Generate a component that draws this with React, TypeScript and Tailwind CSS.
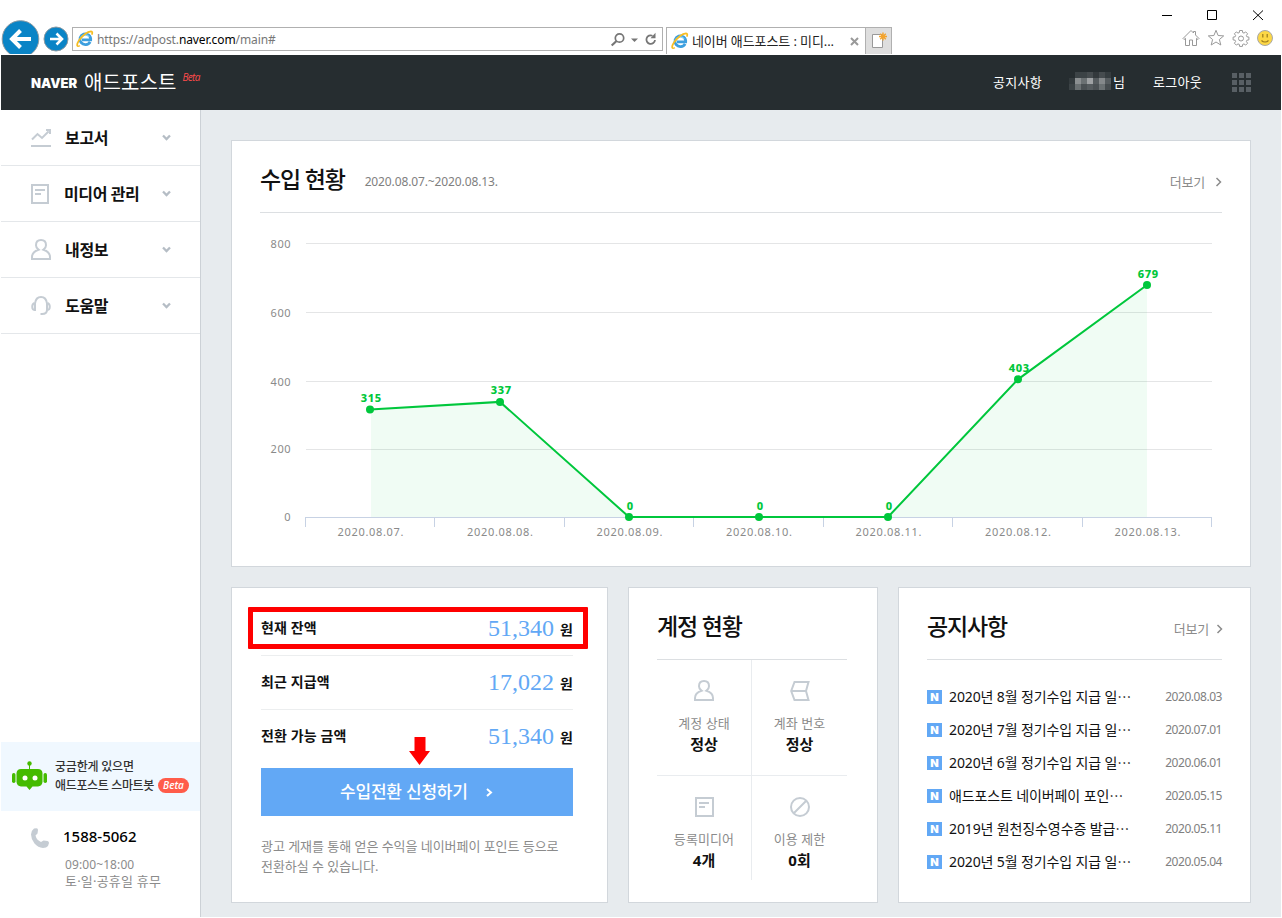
import type { ReactNode } from 'react';
import clsx from 'clsx';

const CHART = [
  { date: '2020.08.07.', value: 315 },
  { date: '2020.08.08.', value: 337 },
  { date: '2020.08.09.', value: 0 },
  { date: '2020.08.10.', value: 0 },
  { date: '2020.08.11.', value: 0 },
  { date: '2020.08.12.', value: 403 },
  { date: '2020.08.13.', value: 679 },
];

const NOTICES = [
  { title: '2020년 8월 정기수입 지급 일⋯', date: '2020.08.03' },
  { title: '2020년 7월 정기수입 지급 일⋯', date: '2020.07.01' },
  { title: '2020년 6월 정기수입 지급 일⋯', date: '2020.06.01' },
  { title: '애드포스트 네이버페이 포인⋯', date: '2020.05.15' },
  { title: '2019년 원천징수영수증 발급⋯', date: '2020.05.11' },
  { title: '2020년 5월 정기수입 지급 일⋯', date: '2020.05.04' },
];

const BALANCES = [
  { label: '현재 잔액', amount: '51,340' },
  { label: '최근 지급액', amount: '17,022' },
  { label: '전환 가능 금액', amount: '51,340' },
];

function IeIcon() {
  return (
    <svg width="18" height="18" viewBox="0 0 18 18" fill="none" className="shrink-0">
      <path d="M14.100 11.800A5.400 5.400 0 1 1 14.700 9.800H6" stroke="#3d9fdf" strokeWidth="2.800" />
      <path d="M4.800 7.600A4.800 4.800 0 0 1 13.200 7" stroke="#86d2f7" strokeWidth="1.200" />
      <path d="M3.800 15.600C.600 17.600.300 14.600 2.800 10.800 5.800 6 11.500 1.400 15 1.300c1.700 0 1.500 1.800.700 3.400" stroke="#f7bd22" strokeWidth="1.700" />
    </svg>
  );
}

function ReportIcon() {
  return (
    <svg width="20" height="20" viewBox="0 0 20 20" fill="none" stroke="#c5ccd3" strokeWidth="2">
      <path d="M1 11.500 6.500 6l4.500 4L17.500 3.500M15 2h4v4" />
      <path d="M15.500 1.500H19V5z" fill="#c5ccd3" stroke="none" />
      <path d="M0 18h20" />
    </svg>
  );
}

function MediaIcon({ width = 18 }: { width?: number }) {
  return (
    <svg width={width} height="20" viewBox={`0 0 ${width} 20`} fill="none" stroke="#c5ccd3" strokeWidth="2">
      <path d={`M1 1h${width - 2}v18H1z`} />
      <path d="M4 6h10M4 10h6" />
    </svg>
  );
}

function PersonIcon() {
  return (
    <svg width="20" height="21" viewBox="0 0 20 21" fill="none" stroke="#c5ccd3" strokeWidth="2">
      <path d="M7.500 10.700Q5 9 5 6.200C5 3 7 1 10 1s5 2 5 5.200Q15 9 12.500 10.700C16.500 12 19 14.500 19 18v2H1v-2c0-3.500 2.500-6 6.500-7.300z" />
    </svg>
  );
}

function HeadsetIcon() {
  return (
    <svg width="20" height="20" viewBox="0 0 20 20" fill="none" stroke="#c5ccd3" strokeWidth="2">
      <path d="M4 15V7.500C4.500 3.500 7 1 10 1s5.500 2.500 6 6.500V14c0 2.500-2 4-5 4H9.500" />
      <path d="M3.500 7C.500 8 .500 13.500 3.500 14M16.500 7c3 1 3 6.500 0 7" />
    </svg>
  );
}

function AccountIcon() {
  return (
    <svg width="20" height="20" viewBox="0 0 20 20" fill="none" stroke="#c5ccd3" strokeWidth="2">
      <path d="M4.500 1H18.500L16 10l2.500 9H4.500L1.200 10zM1.200 10H16" />
    </svg>
  );
}

function BanIcon() {
  return (
    <svg width="20" height="20" viewBox="0 0 20 20" fill="none" stroke="#c5ccd3" strokeWidth="2">
      <circle cx="10" cy="10" r="9" />
      <path d="M4 16 16 4" />
    </svg>
  );
}

const MENU: { label: string; icon: ReactNode; text: string }[] = [
  { label: '보고서', icon: <ReportIcon />, text: 'pl-px tracking-[-0.3px]' },
  { label: '미디어 관리', icon: <MediaIcon />, text: 'tracking-[-0.4px]' },
  { label: '내정보', icon: <PersonIcon />, text: 'pl-px tracking-[-0.3px]' },
  { label: '도움말', icon: <HeadsetIcon />, text: 'pl-px tracking-[-0.3px]' },
];

const STATUS: { label: string; value: string; icon: ReactNode; cell: string }[] = [
  { label: '계정 상태', value: '정상', icon: <PersonIcon />, cell: 'h-[116px] border-r border-b' },
  { label: '계좌 번호', value: '정상', icon: <AccountIcon />, cell: 'h-[116px] border-b' },
  { label: '등록미디어', value: '4개', icon: <MediaIcon width={19} />, cell: 'h-[104px] border-r' },
  { label: '이용 제한', value: '0회', icon: <BanIcon />, cell: 'h-[104px]' },
];

function BrowserBar() {
  return (
    <div className="flex h-[55px] justify-between overflow-hidden bg-white">
      <div className="flex items-start">
        <svg width="72" height="54" viewBox="0 0 72 54" fill="none" className="shrink-0">
          <circle cx="20.500" cy="39" r="18.300" fill="#0a84c6" stroke="#8c9aa3" />
          <path d="M31 39H13M20.500 30.500 12 39l8.500 8.500" stroke="#fff" strokeWidth="4" />
          <circle cx="56" cy="39" r="12" fill="#0a84c6" stroke="#8c9aa3" />
          <path d="M50 39h11M56.500 33.500 62 39l-5.500 5.500" stroke="#fff" strokeWidth="2.600" />
        </svg>
        <div className="mt-[27px] flex h-6 w-[591px] items-center border border-[#b0b0b0] pr-[4px] pl-[3px]">
          <IeIcon />
          <span className="mt-px ml-[3px] flex-1 text-[12px] leading-5 tracking-[-0.1px] text-[#777]">
            https://adpost.<span className="text-black">naver.com</span>/main#
          </span>
          <svg width="48" height="16" viewBox="0 0 48 16" fill="none" stroke="#767676" className="mt-[2px]">
            <circle cx="9.500" cy="6" r="4.200" strokeWidth="1.700" />
            <path d="m6.500 9-4.800 4.500" strokeWidth="2.200" />
            <path d="M21 6.500h7l-3.500 3.500z" fill="#767676" stroke="none" />
            <path d="M42.500 3.700A4.300 4.300 0 1 0 45 8" strokeWidth="1.800" />
            <path d="M40.500 6.200h5V.800z" fill="#767676" stroke="none" />
          </svg>
        </div>
        <div className="mt-[27px] ml-[3px] flex h-[27px] w-[199px] items-center border-t border-l border-[#b0b0b0] pr-[6px] pl-[4px]">
          <IeIcon />
          <span className="ml-[3px] flex-1 text-[13px] leading-5 tracking-[-0.1px] whitespace-nowrap text-[#222]">네이버 애드포스트 : 미디...</span>
          <svg width="9" height="9" viewBox="0 0 9 9" stroke="#999" strokeWidth="2"><path d="m1 1 7 7M8 1 1 8" /></svg>
        </div>
        <div className="mt-[27px] flex h-[27px] w-[27px] justify-center border border-b-0 border-[#b0b0b0] bg-[#dedede]">
          <svg width="16" height="22" viewBox="0 0 16 22">
            <path d="M1.500 6.500h10v13h-10z" fill="#fff" stroke="#999" />
            <path d="M12 4.500v8M8 8.500h8M9.200 5.700l5.600 5.600M14.800 5.700l-5.600 5.600" stroke="#f4a32b" strokeWidth="1.400" />
          </svg>
        </div>
      </div>
      <div className="flex flex-col items-end pt-[10px] pr-[9px]">
        <svg width="102" height="11" viewBox="0 0 102 11" fill="none" stroke="#000" className="mr-[9px]">
          <path d="M0 5.500h10" />
          <path d="M45.500.500h9v9h-9z" />
          <path d="m91 .500 10 9.500M101 .500l-10 9.500" />
        </svg>
        <div className="mt-[8px] flex gap-[7px]">
          <svg width="18" height="18" viewBox="0 0 18 18" fill="none" stroke="#999">
            <path d="M1 9.500 9 1.500l2.500 2.500V2.500h2V6L17 9.500l-1 1-1.500-1.200V16.500h-4V11h-3v5.500h-4V9.300L2 10.500z" />
          </svg>
          <svg width="18" height="18" viewBox="0 0 18 18" fill="none" stroke="#999">
            <path d="M9 1.300l2.100 5.200 5.600.400-4.300 3.600 1.400 5.500L9 13l-4.800 3 1.400-5.500L1.300 6.900l5.600-.400z" strokeLinejoin="round" />
          </svg>
          <svg width="18" height="18" viewBox="0 0 18 18" fill="none" stroke="#999" strokeLinejoin="round">
            <path d="M7.600 1.500h2.800l.300 2.100 1.300.500L13.700 2.900l1.900 1.900-1.200 1.700.500 1.300 2 .300v2.800l-2 .300-.500 1.300 1.200 1.700-1.900 1.900-1.700-1.200-1.300.500-.300 2H7.600l-.300-2-1.300-.500-1.700 1.200-1.900-1.900 1.200-1.700-.500-1.300-2-.300V8.100l2-.300.500-1.300-1.200-1.700 1.900-1.900L6 4.100l1.300-.500z" />
            <circle cx="9" cy="9.500" r="2.500" />
          </svg>
          <svg width="16" height="18" viewBox="0 0 16 18" fill="none">
            <circle cx="8" cy="9" r="7.500" fill="#fcd746" stroke="#a8a8a8" />
            <path d="M5.800 5v3.500M10.200 5v3.500M4.500 11.500c2 2 5 2 7 0" stroke="#9a7a1c" strokeWidth="1.200" />
          </svg>
        </div>
      </div>
    </div>
  );
}

// blurred-out user name, 7 x 3 blocks
const MOSAIC = [
  ['#262d30', '#3c4346', '#3c4346', '#464c4f', '#33393c', '#464c4f', '#363d40'],
  ['#343b3e', '#8b8f91', '#6b7173', '#9fa2a4', '#565c5f', '#85898b', '#565c5f'],
  ['#3c4346', '#6b7173', '#4b5154', '#565c5f', '#4b5154', '#6b7173', '#464c4f'],
];

function Header() {
  return (
    <header className="flex h-[55px] bg-[#262d30] text-white">
      <div className="flex flex-1 pl-[30px]">
        <span className="mt-[18px] w-[53px] font-['Inter'] text-[13px] leading-5 font-black">NAVER</span>
        <span className="mt-[12px] text-[20px] leading-8 tracking-[0.1px]">애드포스트</span>
        <span className="mt-[14px] ml-[6px] font-['Open_Sans'] text-[10px] leading-4 tracking-[-0.7px] text-[#ff4b4b] italic">Beta</span>
      </div>
      <div className="flex items-start pt-[17px] pr-[30px] text-[13px] leading-5">
        <span className="tracking-[0.3px]">공지사항</span>
        <svg width="42" height="18" className="ml-[27px]" shapeRendering="crispEdges">
          {MOSAIC.map((row, y) => row.map((fill, x) => <rect key={`${x}-${y}`} x={x * 6} y={y * 6} width="6" height="6" fill={fill} />))}
        </svg>
        <span className="ml-[2px]">님</span>
        <span className="ml-[28px] tracking-[0.3px]">로그아웃</span>
        <svg width="19" height="19" fill="#585f64" className="mt-px ml-[30px]">
          {[0, 7, 14].map((y) => [0, 7, 14].map((x) => <rect key={`${x}-${y}`} x={x} y={y} width="5" height="5" />))}
        </svg>
      </div>
    </header>
  );
}

function Sidebar() {
  return (
    <aside className="flex w-[200px] flex-col border-r border-[#ccd1d6] bg-white">
      {MENU.map((item) => (
        <div key={item.label} className="flex h-14 items-center border-b border-[#e4e7ea] pr-[29px] pl-[30px]">
          <span className="flex w-[33px]">{item.icon}</span>
          <span className={clsx('flex-1 text-[16px] leading-6 font-bold text-[#111]', item.text)}>{item.label}</span>
          <svg width="9" height="7" viewBox="0 0 9 7" fill="none" stroke="#b5bdc5" strokeWidth="2.300"><path d="m1 1.500 3.500 3.500L8 1.500" /></svg>
        </div>
      ))}
      <div className="mt-auto flex h-[69px] bg-[#f0f8ff] pl-[11px]">
        <svg width="35" height="30" viewBox="0 0 35 30" fill="#44bb00" className="mt-[19px]">
          <circle cx="17.500" cy="2.500" r="2.200" />
          <path d="M17 3h1v6h-1zM9 8h17q4 0 4.500 4v9q-.500 4-4.500 4.500h-5.500L17.500 29l-3-3.500H9Q5 25 4.500 21v-9Q5 8 9 8z" />
          <rect x="0" y="12" width="3.500" height="10" rx="1.700" />
          <rect x="31.500" y="12" width="3.500" height="10" rx="1.700" />
          <circle cx="13" cy="17" r="2.500" fill="#fff" />
          <circle cx="23" cy="17" r="2.500" fill="#fff" />
        </svg>
        <div className="mt-[15px] ml-[8px] text-[12px] leading-[19px] font-medium tracking-[-0.35px] whitespace-nowrap text-[#333]">
          <div className="tracking-[-0.2px]">궁금한게 있으면</div>
          <div className="flex items-center">
            애드포스트 스마트봇
            <span className="ml-[4px] h-[15px] w-[31px] rounded-full bg-[#ff5c4a] text-center font-['Open_Sans'] text-[10px] leading-[15px] font-semibold tracking-normal text-white italic">Beta</span>
          </div>
        </div>
      </div>
      <div className="flex h-[106px] pt-[14px] pl-[30px]">
        <svg width="18" height="20" viewBox="0 0 18 20" fill="#c5ccd3" className="mt-[3px]">
          <path d="M3 .500 5.500.200Q7 .500 7 2L6.500 5.500 4.500 7.500Q5.500 12 10 14l2.500-1.500 4 .500q1.500.500 1.500 2L17 18q-1.500 2-5 2Q7 19.500 3.500 15.500 0 11 0 6.500.200 2.500 3 .500z" />
        </svg>
        <div className="ml-[14px] whitespace-nowrap">
          <div className="text-[15px] leading-[22px] font-medium text-black">1588-5062</div>
          <div className="mt-[9px] ml-[2px] text-[12px] leading-[17px] tracking-[0.1px] text-[#8b8b8b]">09:00~18:00</div>
          <div className="ml-[2px] text-[13px] leading-[17px] tracking-[0.2px] text-[#8b8b8b]">토·일·공휴일 휴무</div>
        </div>
      </div>
    </aside>
  );
}

function More({ className }: { className: string }) {
  return (
    <span className={clsx('flex items-center pt-[5px] text-[13px] leading-5 tracking-[-0.2px] text-[#8b8b8b]', className)}>
      더보기
      <svg width="7" height="10" viewBox="0 0 7 10" fill="none" stroke="#8b8b8b" strokeWidth="1.500"><path d="m1.500 1 4 4-4 4" /></svg>
    </span>
  );
}

function IncomeChart() {
  const px = (i: number) => Math.round(110 + i * 129.5);
  const py = (v: number) => 304 - v * 0.3416;
  const line = CHART.map((d, i) => `${px(i)},${py(d.value)}`).join(' ');
  return (
    <svg width="962" height="353" viewBox="0 0 962 353" className="block font-['Noto_Sans'] text-[11px]">
      {[30, 99, 168, 236, 304].map((y, i) => (
        <g key={y}>
          <rect x="46" y={y} width="906" height="1" fill={i === 4 ? '#c7d2e4' : '#e4e5e6'} />
          <text x="31" y={i > 2 ? y + 4 : y + 5} textAnchor="end" fill="#8a8a8a" letterSpacing="0.5">{800 - i * 200}</text>
        </g>
      ))}
      {[45, 174, 304, 433, 563, 692, 822, 951].map((x) => (
        <rect key={x} x={x} y="304" width="1" height="10" fill="#c7d2e4" />
      ))}
      <polygon points={`111,304 111,${py(315)} ${line} ${px(6)},304`} fill="#00c73c" fillOpacity="0.06" />
      <polyline points={line} fill="none" stroke="#00c73c" strokeWidth="2" />
      {CHART.map((d, i) => (
        <g key={d.date}>
          <circle cx={px(i)} cy={py(d.value)} r="4" fill="#00c73c" />
          <text x={px(i) + 1.2} y={py(d.value) - 7.5} textAnchor="middle" fill="#00c73c" fontWeight="800" letterSpacing="0.6">{d.value}</text>
          <text x={110 + i * 129.5 - 32.5} y="323" textLength="66" fill="#8a8a8a">{d.date}</text>
        </g>
      ))}
    </svg>
  );
}

function CardHead({ title, children }: { title: string; children?: ReactNode }) {
  return (
    <div className="flex h-[72px] items-center border-b border-[#dcdfe2] pt-[5px]">
      <h2 className="text-[23px] leading-8 font-medium tracking-[-1.2px] text-[#111]">{title}</h2>
      {children}
    </div>
  );
}

export default function App() {
  return (
    <div className="h-[918px] w-[1282px] overflow-hidden bg-white font-['Noto_Sans','Noto_Sans_CJK_KR',sans-serif]" lang="ko">
      <BrowserBar />
      <div className="mx-px">
        <Header />
        <div className="flex h-[807px] bg-[#e7ebee]">
          <Sidebar />
          <main className="flex w-[1080px] flex-col gap-5 px-[30px] pt-[30px]">
            <section className="h-[427px] border border-[#d2d7dc] bg-white px-7">
              <CardHead title="수입 현황">
                <span className="mt-[6px] ml-[20px] flex-1 text-[12px] leading-5 tracking-[-0.12px] text-[#808080]">2020.08.07.~2020.08.13.</span>
                <More className="gap-[10px]" />
              </CardHead>
              <IncomeChart />
            </section>

            <div className="flex h-[316px] gap-5">
              <section className="w-[377px] border border-[#d2d7dc] bg-white pt-[14px] pr-[34px] pl-[29px]">
                {BALANCES.map((b, i) => (
                  <div key={b.label} className={clsx('relative flex h-[54px] items-center pb-[2px]', i < 2 && 'border-b border-[#eceeef]')}>
                    {i === 0 && <div className="absolute top-[5px] -left-[13px] h-[42px] w-[340px] rounded-[1px] border-[5px] border-[#ff0000]" />}
                    <span className="flex-1 text-[14px] leading-6 font-bold tracking-[0.1px] text-[#111]">{b.label}</span>
                    <span className="font-['Liberation_Serif'] text-[24px] leading-8 text-[#62a8f5]">{b.amount}</span>
                    <span className="mt-[4px] ml-[6px] text-[14px] leading-6 font-bold text-[#111]">원</span>
                    {i === 2 && (
                      <svg width="22" height="28" viewBox="0 0 22 28" fill="#ff0000" className="absolute top-[27px] left-[148px]">
                        <path d="M5.500 0h11v14H21L10.500 28 0 14h5.500z" />
                      </svg>
                    )}
                  </div>
                ))}
                <button className="mt-1 flex h-12 w-full items-center bg-[#62a8f5] pl-[79px] text-[17px] leading-6 font-medium tracking-[-0.2px] text-white">
                  수입전환 신청하기
                  <svg width="7" height="9" viewBox="0 0 7 9" fill="none" stroke="#fff" strokeWidth="2" className="mt-px ml-[18px]"><path d="m1 1 4 3.500L1 8" /></svg>
                </button>
                <p className="mt-[20px] text-[13px] leading-5 tracking-[-0.04px] whitespace-nowrap text-[#8b8b8b]">
                  광고 게재를 통해 얻은 수익을 네이버페이 포인트 등으로
                  <br />
                  전환하실 수 있습니다.
                </p>
              </section>

              <section className="w-[250px] border border-[#d2d7dc] bg-white pl-7">
                <div className="w-[190px]">
                  <CardHead title="계정 현황" />
                  <div className="grid grid-cols-2">
                    {STATUS.map((s) => (
                      <div key={s.label} className={clsx('flex flex-col items-center border-[#e9ecef] pt-5', s.cell)}>
                        <span className="flex h-[21px] items-end">{s.icon}</span>
                        <span className="mt-[12px] text-[13px] leading-5 tracking-[0.1px] text-[#8b8b8b]">{s.label}</span>
                        <span className="text-[15px] leading-[22px] font-bold text-[#111]">{s.value}</span>
                      </div>
                    ))}
                  </div>
                </div>
              </section>

              <section className="w-[353px] border border-[#d2d7dc] bg-white px-7">
                <CardHead title="공지사항">
                  <span className="flex-1" />
                  <More className="-mr-px gap-[7px]" />
                </CardHead>
                <ul className="pt-5">
                  {NOTICES.map((n) => (
                    <li key={n.title} className="flex h-[33px] items-center">
                      <span className="mt-px h-[14px] w-[15px] bg-[#62a8f5] text-center font-['Inter'] text-[11px] leading-[14px] font-black text-white">N</span>
                      <span className="ml-[7px] flex-1 text-[14px] leading-5 tracking-[-0.12px] whitespace-nowrap text-[#111]">{n.title}</span>
                      <span className="text-[12px] leading-5 tracking-[-0.45px] text-[#808080]">{n.date}</span>
                    </li>
                  ))}
                </ul>
              </section>
            </div>
          </main>
        </div>
      </div>
    </div>
  );
}
